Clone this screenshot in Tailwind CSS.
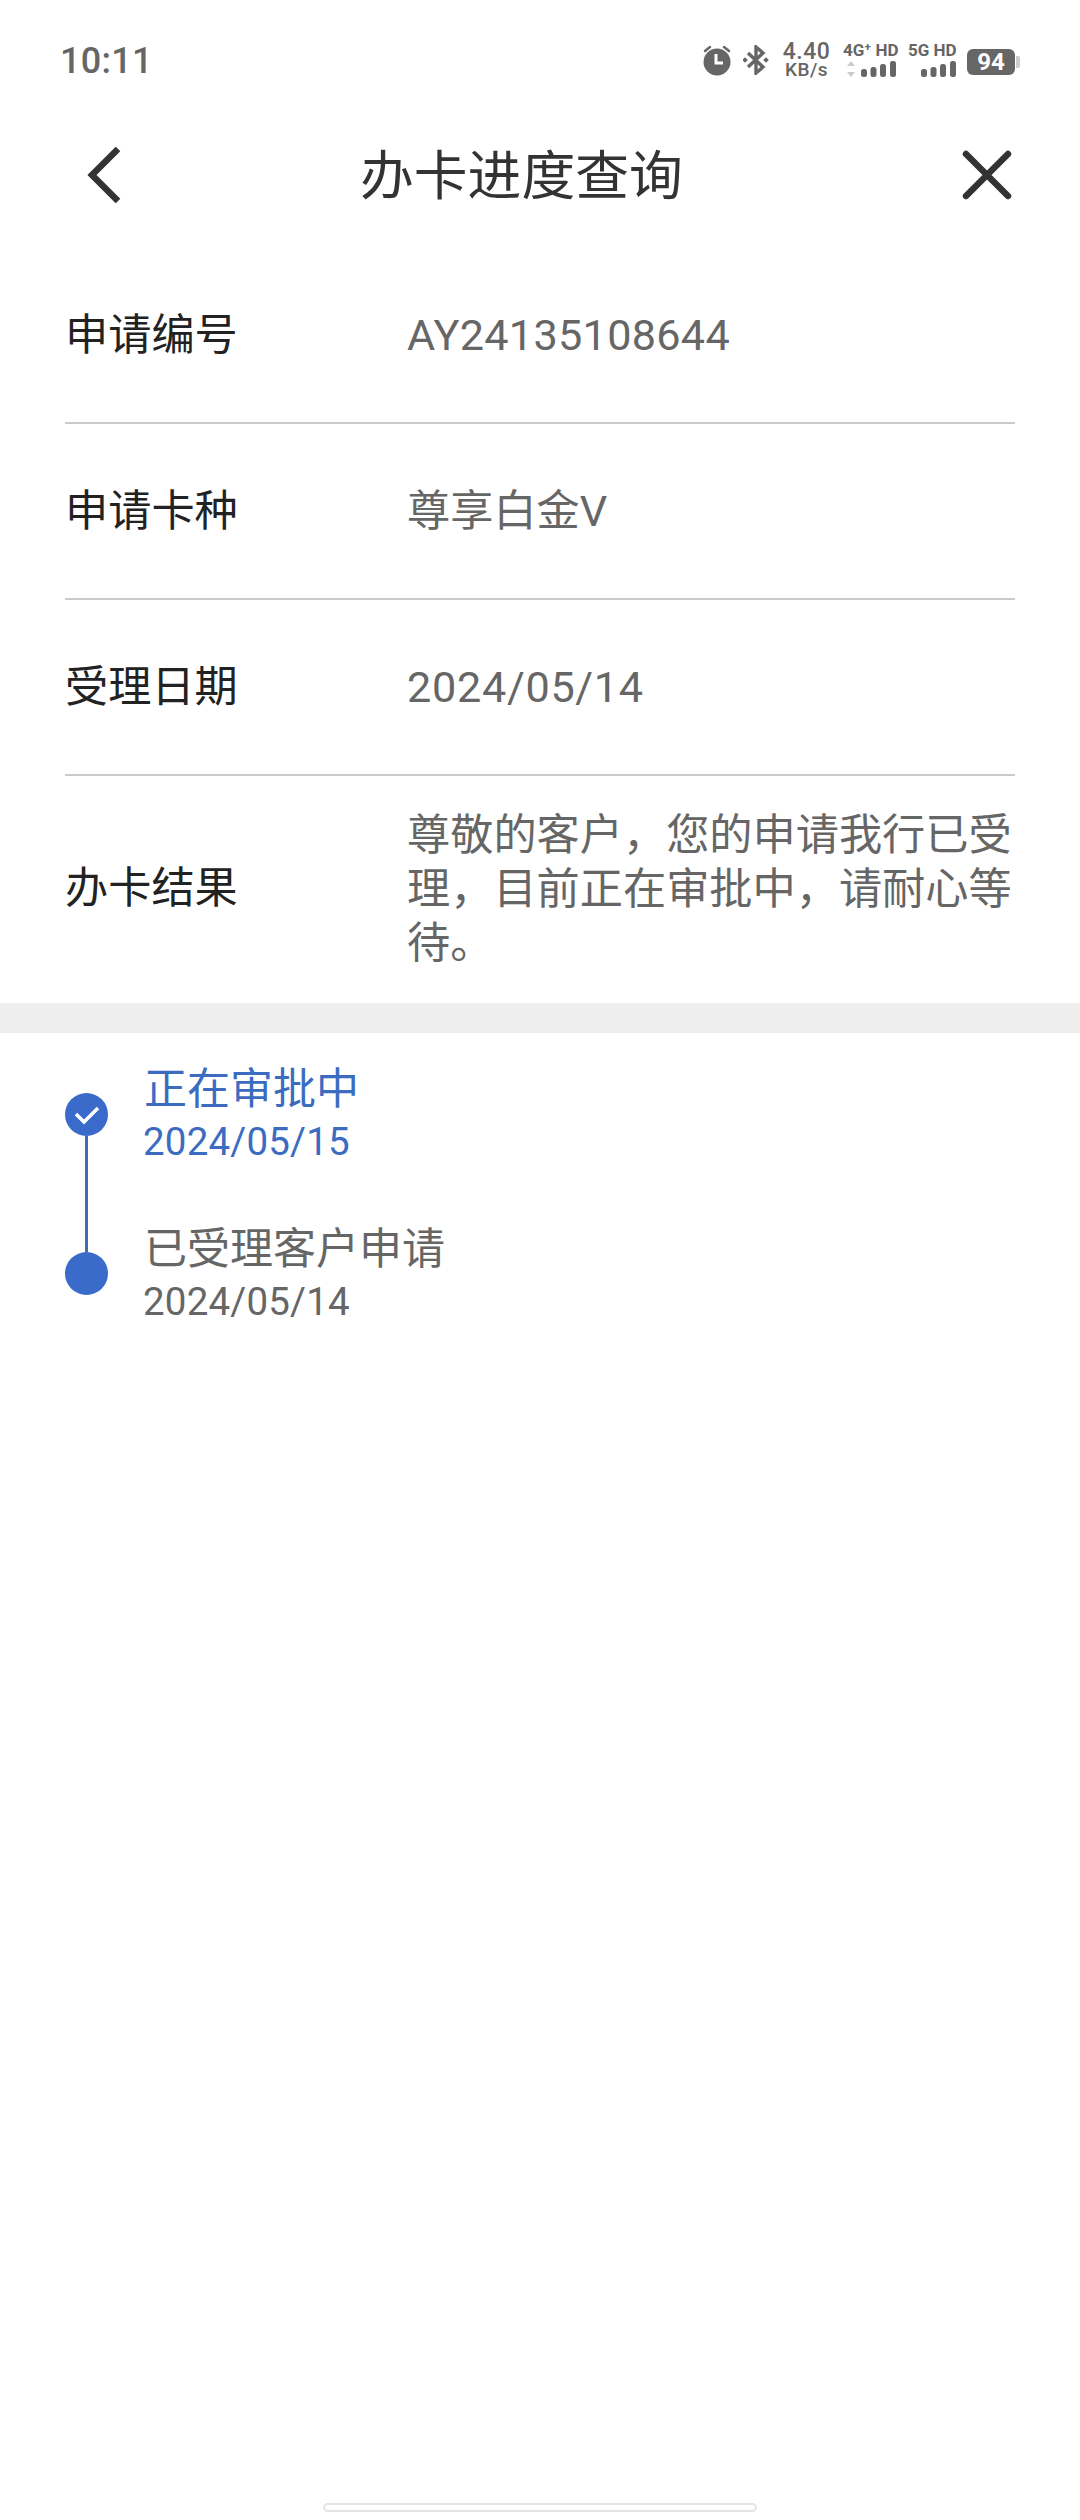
<!DOCTYPE html>
<html lang="zh-CN">
<head>
  <meta charset="UTF-8">
  <meta name="viewport" content="width=device-width, initial-scale=1.0">
  <title>办卡进度查询</title>
  <script src="https://cdn.jsdelivr.net/npm/@tailwindcss/browser@4"></script>
</head>
<body class="bg-white [font-family:Roboto,'Noto_Sans_CJK_SC',sans-serif]">
  <div class="w-[1080px] h-[2520px] flex flex-col overflow-hidden">

    <!-- status bar -->
    <div class="h-[120px] flex items-center pl-[60px] text-[#666]">
      <span class="mt-[2px] text-[36px] font-medium leading-none tracking-[0.3px]">10:11</span>
      <div class="ml-auto mr-[60px] flex items-center">
        <svg class="mt-[2px] w-[32px] h-[32px]" viewBox="0 0 32 32">
          <circle cx="16" cy="17" r="13.5" fill="#666"/>
          <path d="M4 6l5-4M28 6l-5-4" stroke="#666" stroke-width="2.5" stroke-linecap="round"/>
          <path d="M15 9v9h7" fill="none" stroke="#fff" stroke-width="3"/>
        </svg>
        <svg class="ml-[10px] w-[26px] h-[30px]" viewBox="0 0 26 30">
          <path d="M5 8l15 14-7 6V2l7 6L5 22" fill="none" stroke="#666" stroke-width="3.4"/>
          <rect x="0" y="13" width="4" height="4" fill="#666" transform="rotate(45 2 15)"/>
          <rect x="21" y="13" width="4" height="4" fill="#666" transform="rotate(45 23 15)"/>
        </svg>
        <div class="ml-[14px] w-[47px] flex flex-col items-center font-medium">
          <span class="text-[23px] leading-[19px] tracking-[0.5px]">4.40</span>
          <span class="text-[19px] leading-[18px] tracking-[0.5px]">KB/s</span>
        </div>
        <div class="ml-[13px] w-[56px] flex flex-col">
          <span class="text-[17px] leading-[14px] font-bold whitespace-nowrap">4G⁺ HD</span>
          <svg class="mt-[4px] w-[56px] h-[16px]" viewBox="0 0 56 16">
            <path d="M8 0l4 5H4zM8 16l4-5H4z" fill="#ccc"/>
            <rect x="18" y="8" width="6" height="8" rx="2.5" fill="#666"/>
            <rect x="27.500" y="6" width="6" height="10" rx="2.5" fill="#666"/>
            <rect x="37" y="3" width="6" height="13" rx="2.5" fill="#666"/>
            <rect x="47" y="0" width="6" height="16" rx="2.5" fill="#666"/>
          </svg>
        </div>
        <div class="ml-[9px] w-[50px] flex flex-col">
          <span class="text-[17px] leading-[14px] font-bold whitespace-nowrap">5G HD</span>
          <svg class="mt-[4px] w-[50px] h-[16px]" viewBox="0 0 50 16">
            <rect x="13" y="8" width="6" height="8" rx="2.5" fill="#666"/>
            <rect x="22.500" y="6" width="6" height="10" rx="2.5" fill="#666"/>
            <rect x="32" y="3" width="6" height="13" rx="2.5" fill="#666"/>
            <rect x="42" y="0" width="6" height="16" rx="2.5" fill="#666"/>
          </svg>
        </div>
        <div class="ml-[9px] mt-[4px] w-[48px] h-[26px] rounded-[6px] bg-[#666] text-white text-[24px] font-bold leading-none flex items-center justify-center">94</div>
        <div class="ml-[1px] mt-[4px] w-[4px] h-[12px] rounded-r-[2px] bg-[#ccc]"></div>
      </div>
    </div>

    <!-- nav -->
    <div class="h-[110px] flex items-center pl-[87px] pr-[68px] mb-[17px]">
      <svg class="w-[36px] h-[56px] shrink-0" viewBox="0 0 36 56" fill="none" stroke="#333" stroke-width="6.500">
        <path d="M31 2L5 28l26 26"/>
      </svg>
      <h1 class="ml-[237px] mr-auto mt-[3px] text-[53.800px] font-normal leading-none text-[#333]">办卡进度查询</h1>
      <svg class="w-[50px] h-[50px] shrink-0" viewBox="0 0 50 50" fill="none" stroke="#333" stroke-width="6.500" stroke-linecap="round">
        <path d="M4 4l42 42M46 4L4 46"/>
      </svg>
    </div>

    <!-- detail rows -->
    <div class="px-[65px] text-[43.200px]">
      <div class="h-[177px] pt-[3px] flex items-center border-b-2 border-[#ccc]">
        <span class="w-[342px] shrink-0 text-[#222]">申请编号</span>
        <span class="text-[#666] tracking-[0.3px]">AY24135108644</span>
      </div>
      <div class="h-[176px] pt-[3px] flex items-center border-b-2 border-[#ccc]">
        <span class="w-[342px] shrink-0 text-[#222]">申请卡种</span>
        <span class="text-[#666]">尊享白金V</span>
      </div>
      <div class="h-[176px] pt-[3px] flex items-center border-b-2 border-[#ccc]">
        <span class="w-[342px] shrink-0 text-[#222]">受理日期</span>
        <span class="text-[#666] tracking-[0.7px]">2024/05/14</span>
      </div>
      <div class="h-[227px] flex items-center">
        <span class="w-[342px] shrink-0 text-[#222]">办卡结果</span>
        <span class="text-[#666] leading-[54px]">尊敬的客户，您的申请我行已受理，目前正在审批中，请耐心等待。</span>
      </div>
    </div>

    <div class="h-[30px] bg-[#eeeeee]"></div>

    <!-- progress timeline -->
    <div class="flex pl-[65px] pt-[24px]">
      <div class="w-[43px] shrink-0 flex flex-col items-center pt-[36px] h-[238px]">
        <div class="w-[43px] h-[43px] rounded-full bg-[#3a6bcb] flex items-center justify-center shrink-0">
          <svg class="w-[26px] h-[20px]" viewBox="0 0 26 20" fill="none" stroke="#fff" stroke-width="3.500">
            <path d="M2 9l8 8L24 3"/>
          </svg>
        </div>
        <div class="w-[3px] flex-1 bg-[#3a6fb8]"></div>
        <div class="w-[43px] h-[43px] rounded-full bg-[#3a6bcb] shrink-0"></div>
      </div>
      <div class="ml-[36px] pt-[5px] flex flex-col">
        <div class="h-[160px] text-[#3b6cc0]">
          <p class="mb-[2px] text-[43px] leading-[54px]">正在审批中</p>
          <p class="-ml-[1px] text-[38.500px] leading-[48px] tracking-[0.2px]">2024/05/15</p>
        </div>
        <div class="text-[#666]">
          <p class="mb-[2px] text-[43px] leading-[54px]">已受理客户申请</p>
          <p class="-ml-[1px] text-[38.500px] leading-[48px] tracking-[0.2px]">2024/05/14</p>
        </div>
      </div>
    </div>

    <!-- home indicator -->
    <div class="mt-auto mb-[8px] mx-auto w-[434px] h-[9px] rounded-full border-2 border-[#e4e4e4] bg-white"></div>
  </div>
</body>
</html>
